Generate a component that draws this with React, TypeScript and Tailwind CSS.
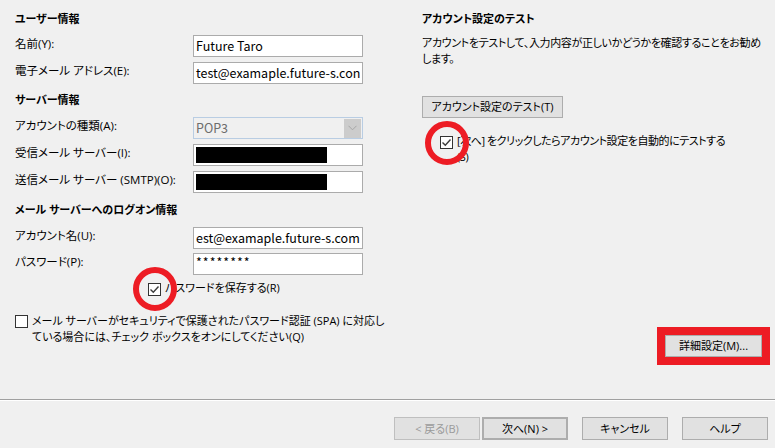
import React from "react";

const font = "font-['Open_Sans','Noto_Sans_CJK_JP',sans-serif] [font-feature-settings:'palt']";

function Check({ checked }: { checked?: boolean }) {
  return (
    <span className="flex h-[13px] w-[13px] shrink-0 items-center justify-center border border-[#333333] bg-white">
      {checked && (
        <svg width="11" height="11" viewBox="0 0 11 11">
          <path d="M1.5 5.5 L4.3 8.3 L9.5 2.5" fill="none" stroke="#3c3c3c" strokeWidth="1.4" />
        </svg>
      )}
    </span>
  );
}

function Circled({ children }: { children: React.ReactNode }) {
  return (
    <span className="relative flex shrink-0">
      {children}
      <span className="pointer-events-none absolute left-1/2 top-1/2 h-[44px] w-[44px] -translate-x-1/2 -translate-y-1/2 rounded-full border-[6px] border-[#ed1c24]" />
    </span>
  );
}

function Field({ label, children, className = "" }: { label: string; children: React.ReactNode; className?: string }) {
  return (
    <div className={`flex h-[22px] items-center ${className}`}>
      <span className="w-[178px] -mt-[4px] whitespace-nowrap text-[11.5px]">{label}</span>
      {children}
    </div>
  );
}

function TextBox({ children }: { children?: React.ReactNode }) {
  return (
    <div className="flex h-[22px] w-[170px] items-center overflow-hidden whitespace-nowrap border border-[#ababab] bg-white px-[2px] font-['Noto_Sans_CJK_JP',sans-serif] text-[12.5px]">
      {children}
    </div>
  );
}

function Btn({ children, className = "" }: { children: React.ReactNode; className?: string }) {
  return (
    <div className={`flex h-[23px] w-[86px] items-center justify-center border border-[#adadad] bg-[#e1e1e1] ${className}`}>
      {children}
    </div>
  );
}

export default function App() {
  return (
    <div className={`h-[448px] w-[775px] overflow-hidden bg-[#f0f0f0] text-[11px] leading-4 text-black ${font}`}>
      <div className="flex h-[399px]">
        {/* left column */}
        <div className="w-[390px] shrink-0 pl-[15px] pt-[11px]">
          <div className="h-4 font-bold">ユーザー情報</div>
          <Field label="名前(Y):" className="mt-[8px]">
            <TextBox>Future Taro</TextBox>
          </Field>
          <Field label="電子メール アドレス(E):" className="mt-[5px]">
            <TextBox>test@examaple.future-s.con</TextBox>
          </Field>

          <div className="mt-[8px] h-4 font-bold">サーバー情報</div>
          <Field label="アカウントの種類(A):" className="mt-[9px]">
            <div className="flex h-[22px] w-[170px] items-center justify-between border border-[#b9cde3] bg-[#f0f0f0] pl-[2px] font-['Noto_Sans_CJK_JP',sans-serif] text-[12.5px] text-[#6d6d6d]">
              POP3
              <span className="mr-px flex h-[19px] w-[17px] items-center justify-center bg-[#cccccc]">
                <svg width="9" height="6" viewBox="0 0 9 6">
                  <path d="M0.5 0.8 L4.5 4.8 L8.5 0.8" fill="none" stroke="#a6a6a6" strokeWidth="1" />
                </svg>
              </span>
            </div>
          </Field>
          <Field label="受信メール サーバー(I):" className="mt-[5px]">
            <TextBox>
              <span className="h-[16px] w-[131px] bg-black" />
            </TextBox>
          </Field>
          <Field label="送信メール サーバー (SMTP)(O):" className="mt-[5px]">
            <TextBox>
              <span className="h-[16px] w-[131px] bg-black" />
            </TextBox>
          </Field>

          <div className="mt-[9px] h-4 font-bold">メール サーバーへのログオン情報</div>
          <Field label="アカウント名(U):" className="mt-[9px]">
            <TextBox>
              <span>est@examaple.future-s.com</span>
              <span className="ml-px h-[15px] w-px bg-black" />
            </TextBox>
          </Field>
          <Field label="パスワード(P):" className="mt-[4px]">
            <TextBox>
              <span className="-mt-[4px] tracking-[1px]">********</span>
            </TextBox>
          </Field>

          <div className="mt-[6px] flex h-4 items-center pl-[133px]">
            <Circled>
              <Check checked />
            </Circled>
            <span className="ml-[4px] -mt-[2px] whitespace-nowrap">パスワードを保存する(R)</span>
          </div>

          <div className="mt-[16px] flex items-start">
            <span className="mt-[2px]">
              <Check />
            </span>
            <span className="ml-[4px] whitespace-nowrap">
              メール サーバーがセキュリティで保護されたパスワード認証 (SPA) に対応し
              <br />
              ている場合には、チェック ボックスをオンにしてください(Q)
            </span>
          </div>
        </div>

        {/* right column */}
        <div className="flex w-[385px] min-w-0 shrink-0 flex-col pl-[32px] pr-[5px] pt-[11px]">
          <div className="h-4 font-bold">アカウント設定のテスト</div>
          <div className="mt-[8px] whitespace-nowrap tracking-[-0.35px]">
            アカウントをテストして、入力内容が正しいかどうかを確認することをお勧め
            <br />
            します。
          </div>
          <div className="mt-[29px] flex h-[22px] w-[141px] items-center justify-center border border-[#adadad] bg-[#e1e1e1]">
            アカウント設定のテスト(T)
          </div>
          <div className="mt-[15px] flex items-start pl-[18px]">
            <span className="mt-[3px]">
              <Circled>
                <Check checked />
              </Circled>
            </span>
            <span className="ml-[4px] whitespace-nowrap tracking-[-0.45px]">
              [次へ] をクリックしたらアカウント設定を自動的にテストする
              <br />
              (S)
            </span>
          </div>
          <div className="mt-auto mb-[34px] flex justify-end">
            <div className="border-[8px] border-[#ed1c24]">
              <div className="flex h-[22px] w-[97px] items-center justify-center border border-[#adadad] bg-[#e1e1e1]">
                詳細設定(M)...
              </div>
            </div>
          </div>
        </div>
      </div>

      <div className="h-px bg-[#a0a0a0]" />
      <div className="h-px bg-white" />

      <div className="flex justify-end pr-[7px] pt-[16px]">
        <Btn className="border-[#bfbfbf] bg-[#cccccc] text-[#9a9a9a]">&lt; 戻る(B)</Btn>
        <Btn className="ml-[2px] border-2 border-[#0078d7]">次へ(N) &gt;</Btn>
        <Btn className="ml-[14px]">キャンセル</Btn>
        <Btn className="ml-[14px]">ヘルプ</Btn>
      </div>
    </div>
  );
}
